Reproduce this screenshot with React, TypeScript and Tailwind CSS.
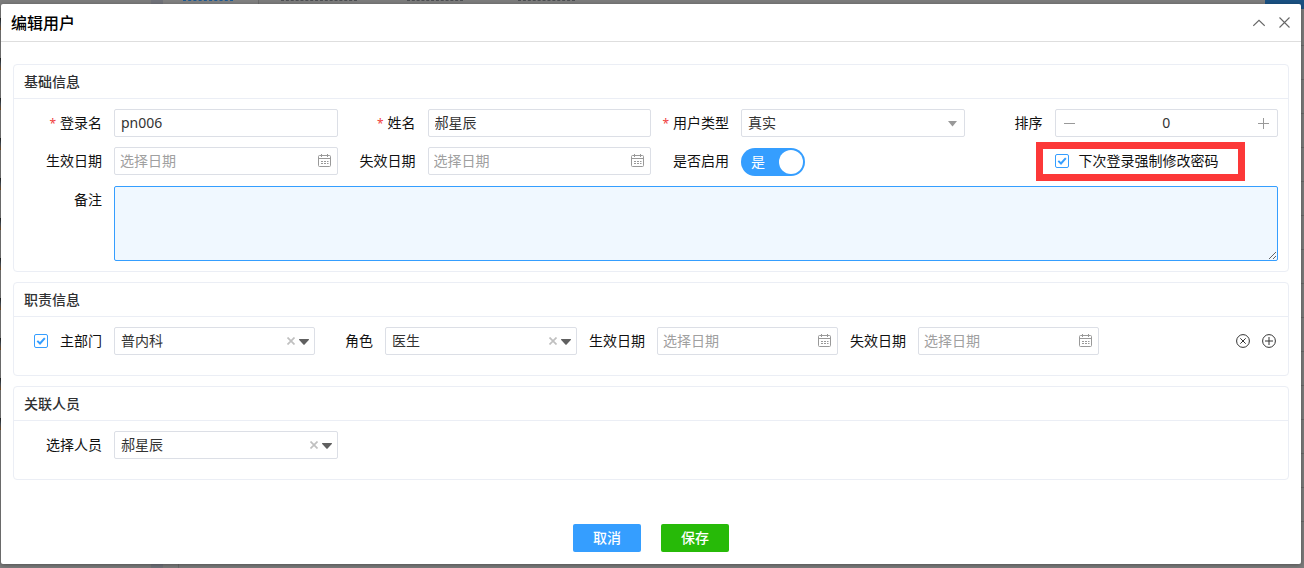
import React, { useState } from 'react';

const FIELD = 'h-7 w-full rounded-xs border border-[#dcdfe6] bg-white text-sm leading-5 text-[#333] outline-none focus:border-[#359eff]';

const DATE_ICON = (
  <svg width="14" height="14" viewBox="0 0 14 14" fill="none" stroke="#999" className="pointer-events-none absolute top-[7px] right-[6px]">
    <rect x="0.5" y="1.5" width="12" height="11" rx="1" />
    <path d="M0.5 4.5h12M3.5 0v3M9.5 0v3" />
    <path d="M3 7.5h2M6 7.5h2M9 7.5h1.5M3 9.5h2M6 9.5h2M9 9.5h1.5" />
  </svg>
);

interface FieldProps {
  id: string;
  label: string;
  required?: boolean;
  labelWidth?: string;
  children: React.ReactNode;
}

const Field: React.FC<FieldProps> = ({ id, label, required, labelWidth = 'w-[90px]', children }) => (
  <div className="flex min-w-0">
    <label htmlFor={id} className={`${labelWidth} shrink-0 pr-3 text-right leading-7 whitespace-nowrap text-[#111]`}>
      {required && <span className="mr-1 text-xs text-[#f04040]">*</span>}
      {label}
    </label>
    <div className="relative min-w-0 flex-1">{children}</div>
  </div>
);

const DateInput: React.FC<{ id: string }> = ({ id }) => (
  <>
    <input id={id} type="text" placeholder="选择日期" className={`${FIELD} pr-6 pb-[2px] pl-[5px] placeholder:text-[#a0a0a0]`} />
    {DATE_ICON}
  </>
);

const ClearableSelect: React.FC<{ id: string; options: string[] }> = ({ id, options }) => (
  <>
    <select id={id} className={`${FIELD} appearance-none pr-9 pl-[6px]`}>
      {options.map(o => <option key={o}>{o}</option>)}
    </select>
    <button type="button" aria-label="清除" className="absolute top-[10px] right-5">
      <svg width="8" height="8" viewBox="0 0 8 8" stroke="#c0c0c0" strokeWidth="1.7"><path d="M0.5 0.5l7 7M7.5 0.5l-7 7" /></svg>
    </button>
    <svg width="10" height="6" viewBox="0 0 10 6" fill="#606060" className="pointer-events-none absolute top-[12px] right-[6px]"><path d="M0.5 0h9a.5.5 0 0 1 .3.9L5.6 5.6a.8.8 0 0 1-1.2 0L.2.9A.5.5 0 0 1 .5 0z" /></svg>
  </>
);

const Tick: React.FC<{ label: string; gap?: string }> = ({ label, gap = 'gap-[10px]' }) => {
  const [checked, setChecked] = useState(true);
  return (
    <label className={`relative flex h-7 items-center ${gap} whitespace-nowrap text-[#111]`}>
      <input
        type="checkbox"
        checked={checked}
        onChange={e => setChecked(e.target.checked)}
        className="size-[14px] shrink-0 appearance-none rounded-xs border border-[#359eff] bg-white"
      />
      {checked && (
        <svg width="14" height="14" viewBox="0 0 14 14" fill="none" stroke="#359eff" strokeWidth="2" className="pointer-events-none absolute top-[7px] left-0"><path d="M3.3 6.9l2.7 2.6 4.8-5.3" /></svg>
      )}
      {label}
    </label>
  );
};

const Section: React.FC<{ title: string; children: React.ReactNode }> = ({ title, children }) => (
  <section className="rounded border border-[#ebeef5]">
    <h3 className="h-[34px] border-b border-[#ebeef5] px-[10px] font-medium leading-[33px] text-[#303133]">{title}</h3>
    <div className="px-[10px] pt-[10px]">{children}</div>
  </section>
);

// dimmed page that shows round the edges of the dialog
const Backdrop: React.FC = () => (
  <div aria-hidden className="absolute inset-0 overflow-hidden bg-[#7c7c7c]">
    <div className="absolute inset-y-0 left-[151px] w-3 bg-[#71737a]" />
    <div className="absolute inset-y-0 left-[178px] w-px bg-[#6c6c6c]" />
    <div className="absolute top-0 left-[163px] h-1 w-24 border-r border-[#6c6c6c] bg-[#808080]" />
    <div className="absolute top-0 left-[183px] w-[50px] border-b border-dashed border-[#1d5a92]" />
    <div className="absolute top-0 left-[281px] w-[76px] border-b border-dashed border-[#4d4f53]" />
    <div className="absolute top-0 left-[407px] w-14 border-b border-dashed border-[#4d4f53]" />
    <div className="absolute top-0 left-[518px] w-[57px] border-b border-dashed border-[#4d4f53]" />
    <div className="absolute top-[18px] left-0 flex w-px flex-col gap-7">
      {Array.from({ length: 11 }, (_, i) => (
        <div key={i} className="h-3 bg-linear-to-b from-[#222] via-[#4a5560] to-[#8a5210]" />
      ))}
    </div>
    <div className="absolute top-[12px] right-0 w-[3px]">
      {Array.from({ length: 15 }, (_, i) => (
        <div key={i} className="h-[34px] border-b border-[#696969]" />
      ))}
    </div>
    <div className="absolute top-0 right-0 h-[9px] w-[39px] bg-[#1a5182]" />
  </div>
);

export default function App() {
  const [enabled, setEnabled] = useState(true);
  const [order, setOrder] = useState(0);

  return (
    <div className="relative min-h-screen py-1 pr-[3px] pl-px font-['Noto_Sans','Noto_Sans_CJK_SC',sans-serif] text-sm">
      <Backdrop />
      <div role="dialog" aria-labelledby="title" className="relative flex min-h-[calc(100vh-8px)] flex-col rounded-xs bg-white shadow-[0_1px_4px_rgba(0,0,0,0.35)]">
        <header className="flex h-[38px] items-center justify-between border-b border-[#dedede] pr-[11px] pl-[10px]">
          <h2 id="title" className="text-base font-medium text-black">编辑用户</h2>
          <div className="flex items-center gap-[14px]">
            <button type="button" aria-label="收起">
              <svg width="12" height="12" viewBox="0 0 12 12" fill="none" stroke="#666" strokeWidth="1.1"><path d="M0.3 8.8L6 3.3l5.7 5.5" /></svg>
            </button>
            <button type="button" aria-label="关闭">
              <svg width="11" height="11" viewBox="0 0 11 11" fill="none" stroke="#666" strokeWidth="1.1"><path d="M0.5 0.5l10 10M10.5 0.5l-10 10" /></svg>
            </button>
          </div>
        </header>

        <form className="flex flex-1 flex-col px-3 pt-[22px] pb-3" onSubmit={e => e.preventDefault()}>
          <div className="flex flex-col gap-[10px]">
            <Section title="基础信息">
              <div className="grid grid-cols-4 gap-y-[10px] pb-[10px]">
                <Field id="login" label="登录名" required>
                  <input id="login" type="text" defaultValue="pn006" className={`${FIELD} px-[6px] pb-[2px]`} />
                </Field>
                <Field id="name" label="姓名" required>
                  <input id="name" type="text" defaultValue="郝星辰" className={`${FIELD} px-[6px] pb-[2px]`} />
                </Field>
                <Field id="type" label="用户类型" required>
                  <select id="type" className={`${FIELD} appearance-none px-[6px]`}>
                    <option>真实</option>
                  </select>
                  <svg width="9" height="6" viewBox="0 0 9 6" fill="#999" className="pointer-events-none absolute top-[12px] right-2"><path d="M0 0h9L4.5 5.5z" /></svg>
                </Field>
                <Field id="order" label="排序">
                  <div className="flex h-7 rounded-xs border border-[#dcdfe6] text-[#999]">
                    <button type="button" aria-label="减" onClick={() => setOrder(order - 1)} className="flex w-7 items-center justify-center">
                      <svg width="11" height="11" viewBox="0 0 11 11" stroke="currentColor"><path d="M0 5.5h11" /></svg>
                    </button>
                    <input
                      id="order"
                      type="text"
                      value={order}
                      onChange={e => setOrder(Number(e.target.value) || 0)}
                      className="w-full min-w-0 flex-1 text-center leading-5 text-[#333] outline-none"
                    />
                    <button type="button" aria-label="加" onClick={() => setOrder(order + 1)} className="flex w-7 items-center justify-center">
                      <svg width="11" height="11" viewBox="0 0 11 11" stroke="currentColor"><path d="M0 5.5h11M5.5 0v11" /></svg>
                    </button>
                  </div>
                </Field>

                <Field id="start" label="生效日期"><DateInput id="start" /></Field>
                <Field id="end" label="失效日期"><DateInput id="end" /></Field>
                <Field id="enabled" label="是否启用">
                  <button
                    id="enabled"
                    type="button"
                    role="switch"
                    aria-checked={enabled}
                    onClick={() => setEnabled(!enabled)}
                    className={`mt-px flex h-7 w-16 items-center justify-between rounded-full pr-[2px] pl-[10px] text-white ${enabled ? 'bg-[#359eff]' : 'flex-row-reverse bg-[#bbb]'}`}
                  >
                    <span>{enabled ? '是' : '否'}</span>
                    <span className="size-6 rounded-full bg-white" />
                  </button>
                </Field>
                <div className="flex items-start pl-[90px]">
                  <div className="relative">
                    <Tick label="下次登录强制修改密码" />
                    <div className="pointer-events-none absolute -top-[5px] -right-[26px] -bottom-[6px] -left-[19px] border-7 border-[#fc3838]" />
                  </div>
                </div>

                <div className="col-span-4">
                  <Field id="remark" label="备注">
                    <textarea id="remark" className="block h-[75px] w-full resize-y rounded-xs border border-[#359eff] bg-[#f0f8ff] px-[6px] py-1 outline-none" />
                  </Field>
                </div>
              </div>
            </Section>

            <Section title="职责信息">
              <div className="grid grid-cols-[291fr_262fr_261fr_261fr_179fr] pb-5">
                <div className="flex min-w-0">
                  <div className="flex w-[90px] shrink-0 justify-end pr-3">
                    <Tick label="主部门" gap="gap-3" />
                  </div>
                  <div className="relative min-w-0 flex-1"><ClearableSelect id="dept" options={['普内科']} /></div>
                </div>
                <Field id="role" label="角色" labelWidth="w-[70px]"><ClearableSelect id="role" options={['医生']} /></Field>
                <Field id="roleStart" label="生效日期" labelWidth="w-20"><DateInput id="roleStart" /></Field>
                <Field id="roleEnd" label="失效日期" labelWidth="w-20"><DateInput id="roleEnd" /></Field>
                <div className="flex items-center justify-end gap-3 pr-[2px]">
                  <button type="button" aria-label="删除">
                    <svg width="14" height="14" viewBox="0 0 14 14" fill="none" stroke="#333"><circle cx="7" cy="7" r="6.4" /><path d="M4.3 4.3l5.4 5.4M9.7 4.3l-5.4 5.4" /></svg>
                  </button>
                  <button type="button" aria-label="添加">
                    <svg width="14" height="14" viewBox="0 0 14 14" fill="none" stroke="#333"><circle cx="7" cy="7" r="6.4" /><path d="M3 7h8M7 3v8" /></svg>
                  </button>
                </div>
              </div>
            </Section>

            <Section title="关联人员">
              <div className="grid grid-cols-4 pb-5">
                <Field id="person" label="选择人员"><ClearableSelect id="person" options={['郝星辰']} /></Field>
              </div>
            </Section>
          </div>

          <footer className="mt-auto flex justify-center gap-5 pt-5">
            <button type="button" className="h-7 w-[68px] rounded-xs bg-[#359eff] font-medium text-white">取消</button>
            <button type="submit" className="h-7 w-[68px] rounded-xs bg-[#27ba08] font-medium text-white">保存</button>
          </footer>
        </form>
      </div>
    </div>
  );
}
